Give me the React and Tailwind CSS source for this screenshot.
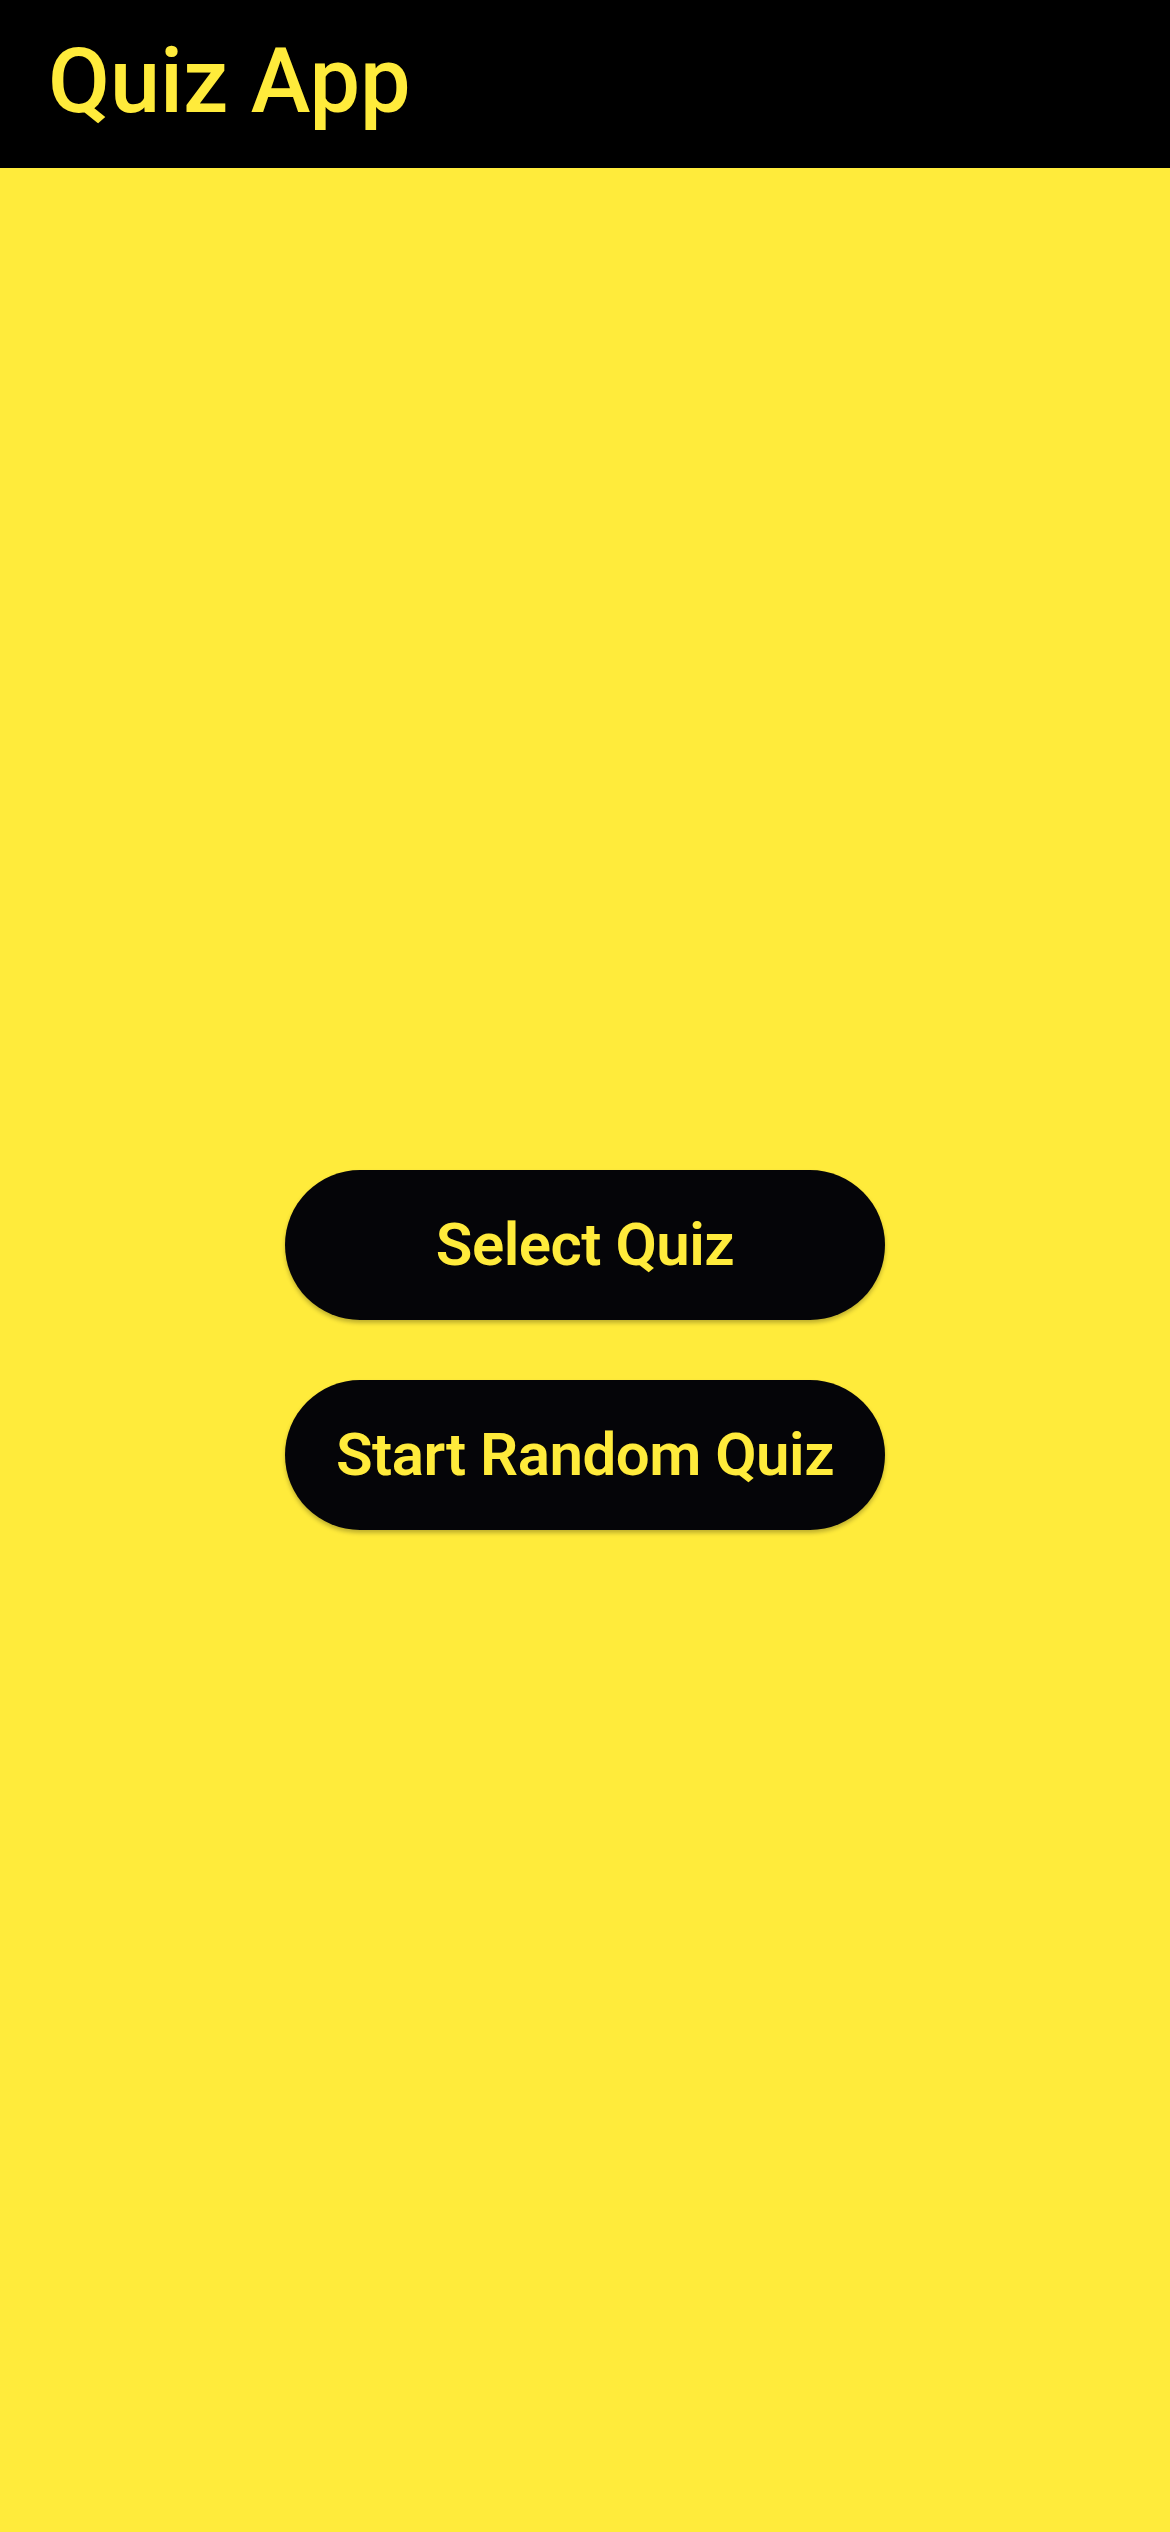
import React from 'react';

const App = () => {
  return (
    <div className="min-h-screen h-[2532px] flex flex-col bg-[#ffeb3b] font-['Roboto',sans-serif]">
      {/* App bar */}
      <header className="h-[168px] bg-black flex items-center px-[48px] shrink-0">
        <h1 className="text-[#ffeb3b] text-[90px] font-medium leading-none -mt-[4px]">Quiz App</h1>
      </header>

      {/* Menu */}
      <main className="flex-1 flex flex-col items-center justify-center gap-[60px]">
        <button className="w-[600px] h-[150px] rounded-full bg-[#050508] text-[#ffeb3b] text-[60px] font-semibold tracking-[-0.5px] shadow-[0_3px_4px_rgba(0,0,0,0.25)]">
          Select Quiz
        </button>
        <button className="w-[600px] h-[150px] rounded-full bg-[#050508] text-[#ffeb3b] text-[60px] font-semibold tracking-[-0.5px] shadow-[0_3px_4px_rgba(0,0,0,0.25)]">
          Start Random Quiz
        </button>
      </main>
    </div>
  );
};

export default App;
